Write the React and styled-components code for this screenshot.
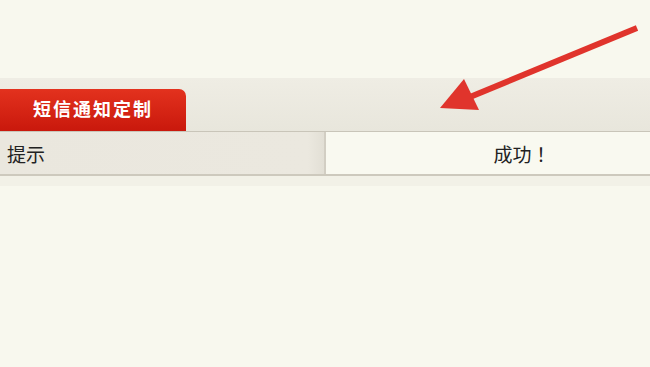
import React from 'react'
import styled, { createGlobalStyle } from 'styled-components'

const Global = createGlobalStyle`
  html, body { margin: 0; padding: 0; }
  body {
    background: #f8f8ee;
    font-family: "Noto Sans CJK SC", "Liberation Sans", sans-serif;
    width: 650px;
    height: 367px;
    overflow: hidden;
  }
`

const Page = styled.div`
  position: relative;
  width: 650px;
  height: 367px;
  padding-top: 78px;
  box-sizing: border-box;
`

const TabBar = styled.div`
  display: flex;
  align-items: flex-end;
  height: 53px;
  background: linear-gradient(#efede4, #e8e6dc);
  border-bottom: 1px solid #c9c5b9;
`

const Tab = styled.div`
  width: 186px;
  height: 42px;
  display: flex;
  align-items: center;
  justify-content: center;
  background: linear-gradient(#e3321e, #c9180c);
  border-top-right-radius: 7px;
  color: #fff;
  font-size: 18px;
  font-weight: bold;
  letter-spacing: 2px;
  padding-bottom: 5px;
  box-sizing: border-box;
`

const Row = styled.div`
  display: grid;
  grid-template-columns: 326px 1fr;
  height: 42px;
  border-bottom: 2px solid #cdc9bd;
`

const Cell = styled.div`
  display: flex;
  align-items: center;
  justify-content: ${p => (p.$center ? 'center' : 'flex-start')};
  padding: ${p => (p.$center ? '0 0 0 68px' : '0 0 0 7px')};
  font-family: ${p => (p.$center ? '"Noto Sans CJK JP", "Noto Sans CJK SC", sans-serif' : 'inherit')};
  font-size: 19px;
  color: #222;
  background: ${p => (p.$head ? 'linear-gradient(90deg, #eae7de, #ebe8df 95%, #e2dfd5)' : '#f9f9f0')};
  border-right: ${p => (p.$head ? '2px solid #d2cec3' : 'none')};
`

const Below = styled.div`
  height: 10px;
  background: #f2f1e7;
`

const Arrow = styled.svg`
  position: absolute;
  left: 0;
  top: 0;
  pointer-events: none;
`

export default function App() {
  return (
    <Page>
      <Global />
      <TabBar>
        <Tab>短信通知定制</Tab>
      </TabBar>
      <Row>
        <Cell $head>提示</Cell>
        <Cell $center>成功！</Cell>
      </Row>
      <Below />
      <Arrow width="650" height="367" viewBox="0 0 650 367">
        <line x1="637" y1="28" x2="470" y2="97" stroke="#e0342c" strokeWidth="6" strokeLinecap="butt" />
        <polygon points="440,108 464,79 479,110" fill="#e0342c" />
      </Arrow>
    </Page>
  )
}
